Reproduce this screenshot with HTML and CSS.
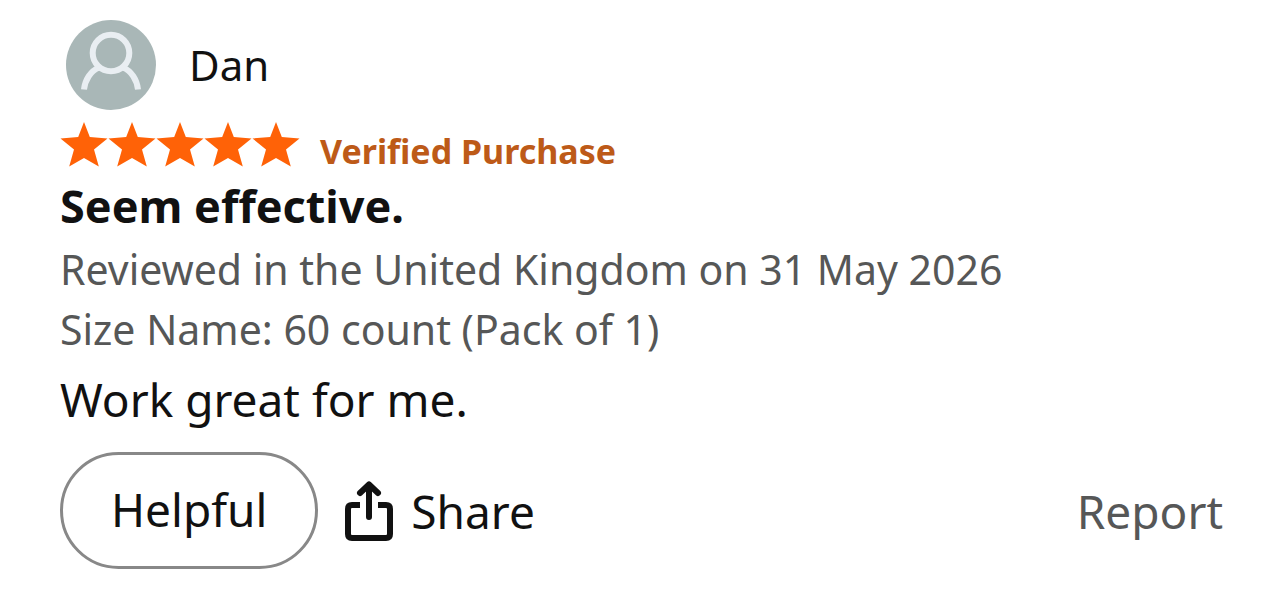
FILE: index.html
```html
<!DOCTYPE html>
<html lang="en-GB">

<head>
  <meta charset="UTF-8">
  <meta name="viewport" content="width=device-width, initial-scale=1.0">
  <title>Customer review</title>
  <link rel="stylesheet" href="styles.css">
</head>

<body>
  <article class="review">
    <div class="profile">
      <svg class="avatar" viewBox="0 0 90 90" aria-hidden="true">
        <circle cx="45" cy="45" r="45" fill="#a9b7b7"/>
        <g fill="none" stroke="#e9eef2" stroke-width="6">
          <circle cx="45" cy="33" r="18.3"/>
          <path d="M18 69.500C19 60 24.500 51 33 47.500M72 69.500C71 60 65.500 51 57 47.500"/>
        </g>
      </svg>
      <span class="profile-name">Dan</span>
    </div>

    <div class="rating">
      <svg class="stars" viewBox="0 0 240 56" role="img" aria-label="5 out of 5 stars">
        <defs>
          <path id="star" d="M24 2L29.800 17L47.500 18.500L34 29.500L38.800 46.500L24 38L9.200 46.500L14 29.500L.5 18.500L18.200 17Z"/>
        </defs>
        <g fill="#ff6207">
          <use href="#star"/>
          <use href="#star" x="48"/>
          <use href="#star" x="96"/>
          <use href="#star" x="144"/>
          <use href="#star" x="192"/>
        </g>
      </svg>
      <span class="verified">Verified Purchase</span>
    </div>

    <h2 class="review-title">Seem effective.</h2>
    <p class="review-meta">Reviewed in the United Kingdom on 31 May 2026</p>
    <p class="review-meta">Size Name: 60 count (Pack of 1)</p>
    <p class="review-text">Work great for me.</p>

    <div class="actions">
      <button class="helpful" type="button">Helpful</button>
      <button class="share" type="button">
        <svg class="share-icon" viewBox="0 0 48 60" aria-hidden="true">
          <g fill="none" stroke="#111" stroke-width="6">
            <path d="M15 24H7Q3 24 3 28V53Q3 57 7 57H41Q45 57 45 53V28Q45 24 41 24H33"/>
            <path d="M24 36V4M15 12L24 3.500L33 12" stroke-linecap="round" stroke-linejoin="round"/>
          </g>
        </svg>
        Share
      </button>
      <a class="report" href="#">Report</a>
    </div>
  </article>
</body>

</html>
```

FILE: styles.css
```css
body {
  margin: 0;
  background-color: #fff;
  color: #111;
  font-family: "Noto Sans", "Open Sans", sans-serif;
}

.review {
  padding: 20px 60px 38px;
}

h2,
p {
  margin: 0;
}

.profile {
  display: flex;
  align-items: center;
  gap: 33px;
  padding-left: 6px;
}

.avatar {
  width: 90px;
  height: 90px;
}

.profile-name {
  font-size: 42px;
  line-height: 60px;
}

.rating {
  display: flex;
  align-items: flex-end;
  gap: 20px;
  margin-top: 10px;
}

.stars {
  width: 240px;
  height: 56px;
}

.verified {
  color: #bd5a18;
  font-size: 34px;
  font-weight: 700;
  line-height: 50px;
}

.review-title {
  margin-bottom: 3px;
  font-size: 45px;
  font-weight: 700;
  line-height: 60px;
}

.review-meta {
  color: #565757;
  font-size: 41px;
  line-height: 60px;
}

.review-text {
  margin-top: 10px;
  font-size: 46px;
  line-height: 60px;
}

.actions {
  display: flex;
  align-items: center;
  gap: 27px;
  margin-top: 23px;
}

.helpful,
.share {
  background-color: transparent;
  color: inherit;
  font-family: inherit;
  font-size: 46px;
  line-height: 60px;
  cursor: pointer;
}

.helpful {
  padding: 24px 48px 27px;
  border: 3px solid #888;
  border-radius: 60px;
}

.share {
  display: flex;
  align-items: center;
  gap: 18px;
  padding: 0;
  border: none;
}

.share-icon {
  width: 48px;
  height: 60px;
}

.report {
  margin-left: auto;
  color: #565757;
  font-size: 46px;
  line-height: 60px;
  text-decoration: none;
}
```
